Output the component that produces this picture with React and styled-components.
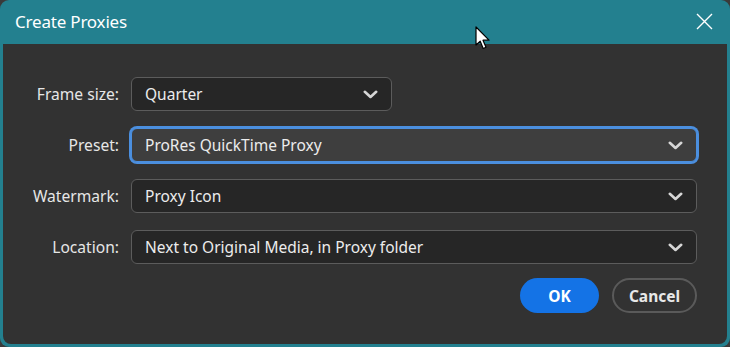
import React from "react";
import styled, { createGlobalStyle } from "styled-components";

const Global = createGlobalStyle`
  html, body {
    margin: 0;
    padding: 0;
    background: #3a3a3a;
  }
  body {
    font-family: "Noto Sans", "Open Sans", sans-serif;
    -webkit-font-smoothing: antialiased;
  }
`;

const ROWS = [
  { label: "Frame size:", value: "Quarter", width: 261 },
  { label: "Preset:", value: "ProRes QuickTime Proxy", focused: true },
  { label: "Watermark:", value: "Proxy Icon" },
  { label: "Location:", value: "Next to Original Media, in Proxy folder" },
];

function Chevron() {
  return (
    <svg width="15" height="9" viewBox="0 0 15 9">
      <path
        d="M1.8 1.8 L7.5 7 L13.2 1.8"
        fill="none"
        stroke="#d6d6d6"
        strokeWidth="2.6"
        strokeLinecap="round"
        strokeLinejoin="round"
      />
    </svg>
  );
}

function Cursor() {
  return (
    <CursorWrap>
      <svg width="16" height="25" viewBox="0 0 16 25">
        <path
          d="M1 1 L1 19 L5.2 15.2 L8.2 22.5 L11 21.3 L8 14.2 L14 14.2 Z"
          fill="#ffffff"
          stroke="#000000"
          strokeWidth="1.2"
          strokeLinejoin="round"
        />
      </svg>
    </CursorWrap>
  );
}

export default function App() {
  return (
    <>
      <Global />
      <Window>
        <TitleBar>
          <Title>Create Proxies</Title>
          <CloseButton>
            <svg width="17" height="17" viewBox="0 0 17 17">
              <path d="M1 1 L16 16 M16 1 L1 16" stroke="#ffffff" strokeWidth="1.4" />
            </svg>
          </CloseButton>
        </TitleBar>
        <Body>
          <Form>
            {ROWS.map((row) => (
              <React.Fragment key={row.label}>
                <Label>{row.label}</Label>
                <Select focused={row.focused} fixedWidth={row.width}>
                  <span>{row.value}</span>
                  <Chevron />
                </Select>
              </React.Fragment>
            ))}
          </Form>
          <Buttons>
            <PrimaryButton>OK</PrimaryButton>
            <SecondaryButton>Cancel</SecondaryButton>
          </Buttons>
        </Body>
        <Cursor />
      </Window>
    </>
  );
}

const Window = styled.div`
  position: relative;
  width: 730px;
  height: 347px;
  box-sizing: border-box;
  background: #23808f;
  border-radius: 9px;
  padding: 0 3px 3px 3px;
  display: flex;
  flex-direction: column;
  overflow: hidden;
`;

const TitleBar = styled.div`
  height: 44px;
  flex-shrink: 0;
  display: flex;
  align-items: center;
  justify-content: space-between;
  padding: 0 14px 0 12px;
`;

const Title = styled.div`
  color: #ffffff;
  font-size: 17px;
  letter-spacing: -0.2px;
  padding-bottom: 1px;
`;

const CloseButton = styled.div`
  display: flex;
  align-items: center;
  margin-top: -1px;
`;

const Body = styled.div`
  flex: 1;
  background: #323232;
  border-radius: 0 0 8px 8px;
  padding: 33px 30px 0 0;
  display: flex;
  flex-direction: column;
`;

const Form = styled.div`
  display: grid;
  grid-template-columns: 116px 1fr;
  column-gap: 12px;
  row-gap: 17px;
  align-items: center;
`;

const Label = styled.div`
  text-align: right;
  color: #e6e6e6;
  font-size: 15.6px;
`;

const Select = styled.div`
  box-sizing: border-box;
  height: 34px;
  width: ${(p) => (p.fixedWidth ? `${p.fixedWidth}px` : "auto")};
  justify-self: ${(p) => (p.fixedWidth ? "start" : "stretch")};
  display: flex;
  align-items: center;
  justify-content: space-between;
  padding: 0 13px 0 13px;
  border-radius: 6px;
  background: ${(p) => (p.focused ? "#3e3e3e" : "#262626")};
  border: 1px solid ${(p) => (p.focused ? "#4b8fdf" : "#5c5c5c")};
  box-shadow: ${(p) => (p.focused ? "0 0 0 2px #4b8fdf" : "none")};
  color: #ececec;
  font-size: 15.5px;
  span {
    padding-bottom: 1px;
  }
`;

const Buttons = styled.div`
  display: flex;
  justify-content: flex-end;
  gap: 13px;
  margin-top: 14px;
`;

const PrimaryButton = styled.div`
  box-sizing: border-box;
  height: 35px;
  width: 79px;
  border-radius: 18px;
  background: #1473e6;
  color: #ffffff;
  font-size: 15.5px;
  font-weight: 700;
  display: flex;
  align-items: center;
  justify-content: center;
`;

const SecondaryButton = styled(PrimaryButton)`
  width: 85px;
  background: transparent;
  border: 2px solid #5a5a5a;
  color: #e8e8e8;
`;

const CursorWrap = styled.div`
  position: absolute;
  left: 475px;
  top: 26px;
  pointer-events: none;
`;
